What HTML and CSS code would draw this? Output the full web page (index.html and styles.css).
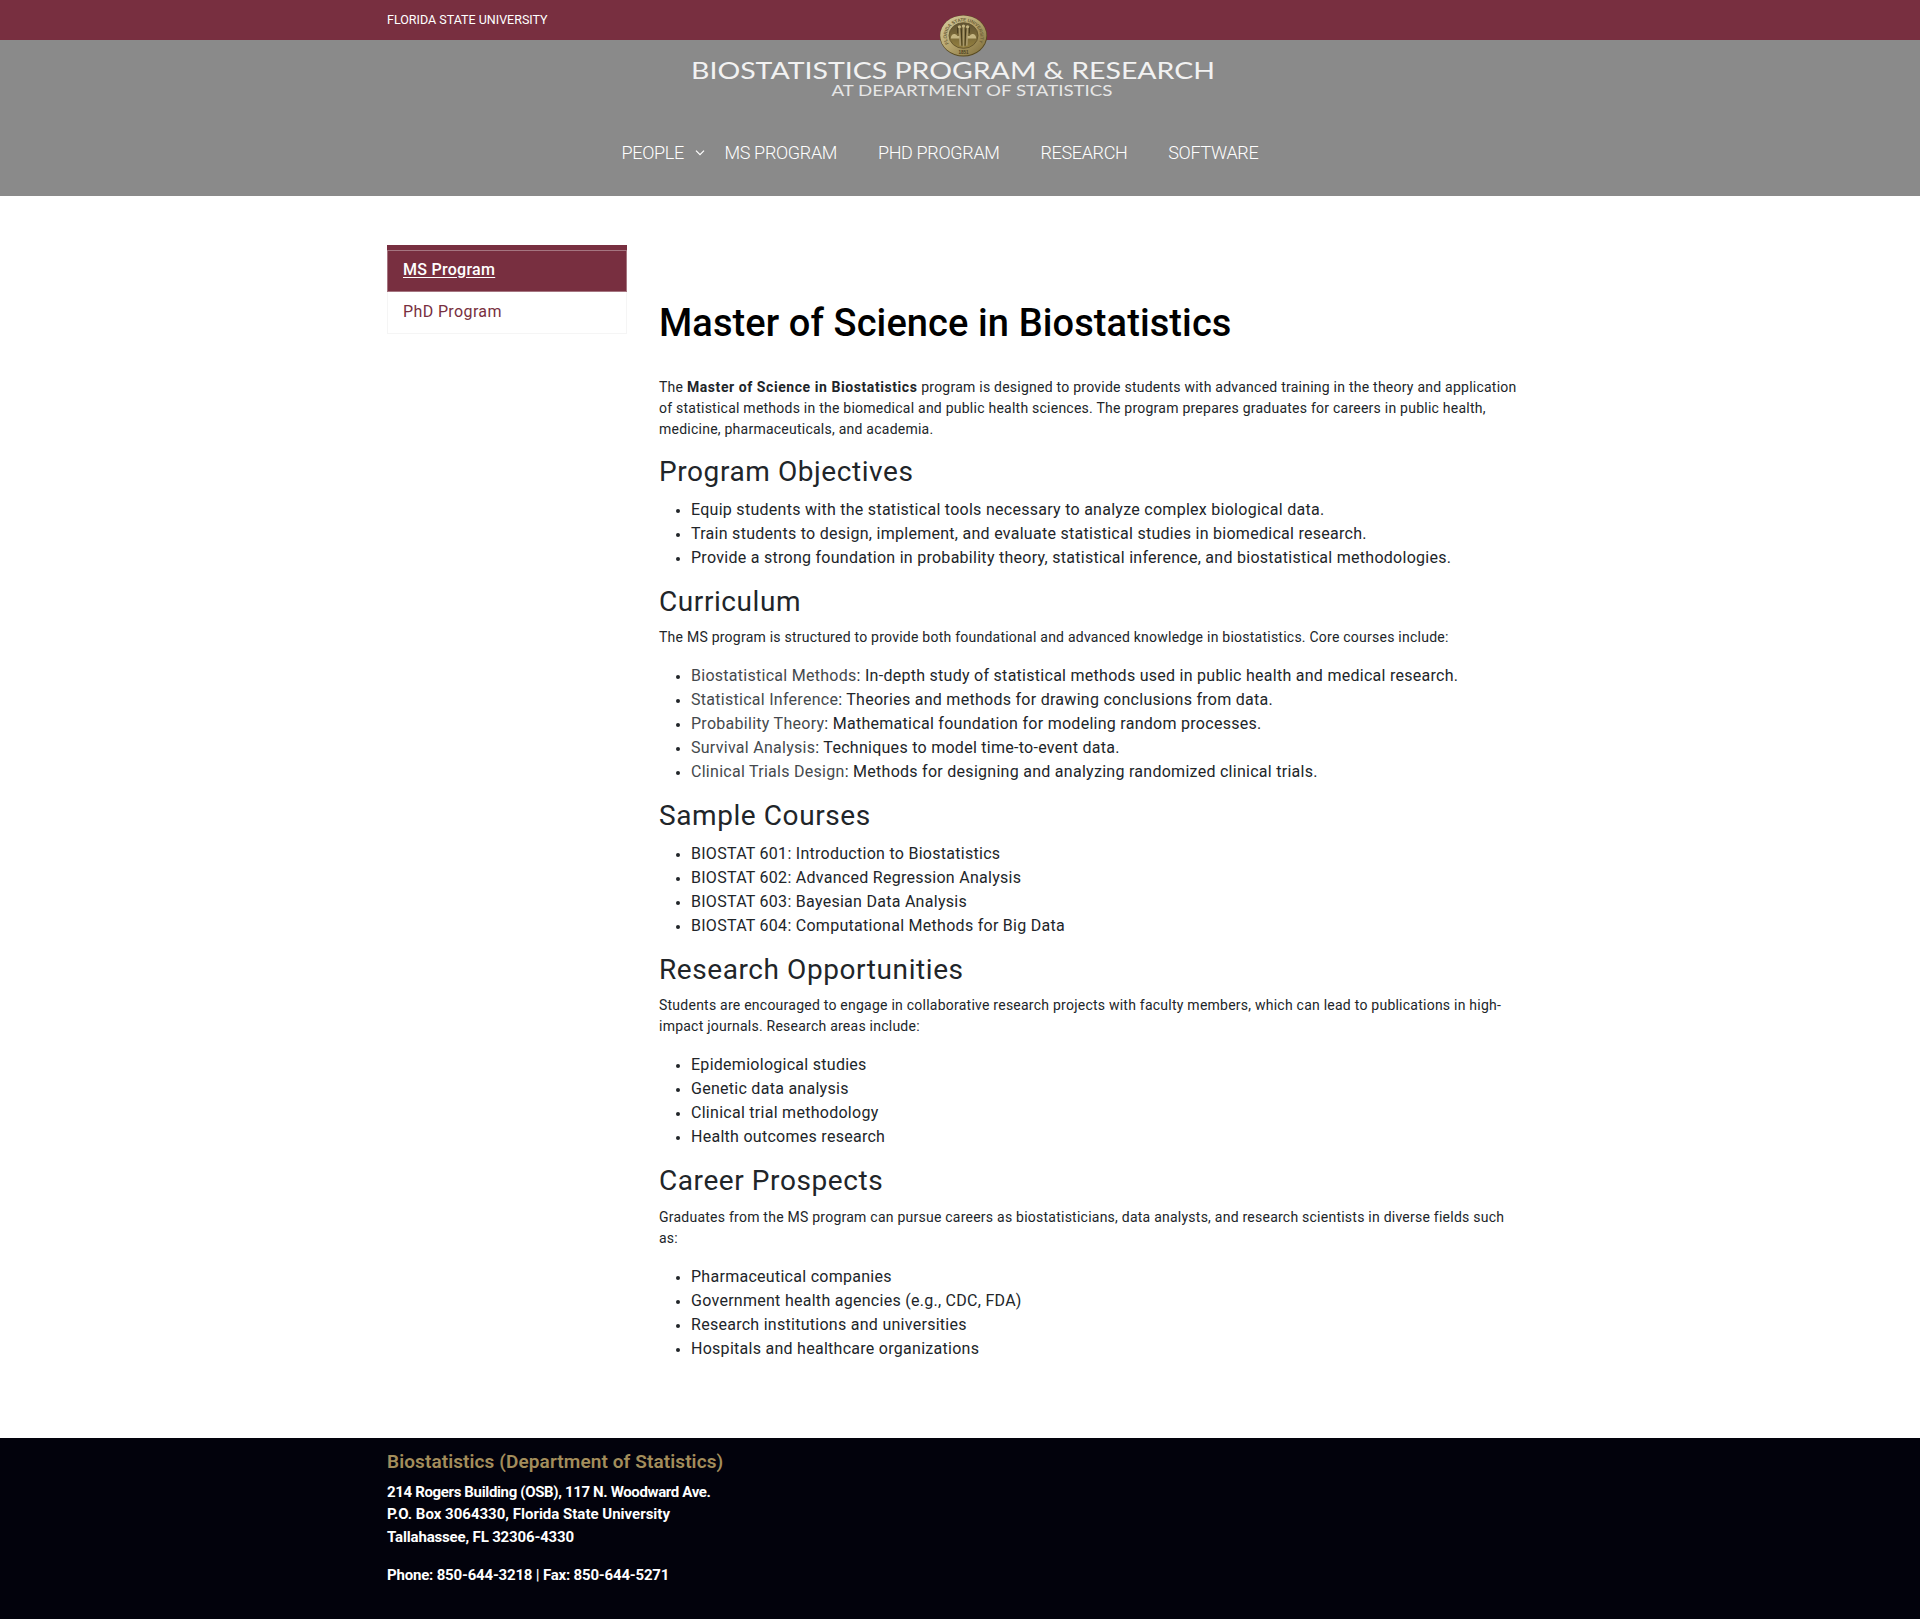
FILE: index.html
```html
<!DOCTYPE html>
<html lang="en">
<head>
<meta charset="utf-8">
<title>MS Program | Biostatistics</title>
<link rel="stylesheet" href="styles.css">
</head>
<body>
<div class="topbar"><div class="container"><a class="topbar-link" href="#">FLORIDA STATE UNIVERSITY</a></div></div>
<header class="header">
  <svg class="seal" viewBox="0 0 48 44" aria-label="Florida State University seal">
    <defs>
      <linearGradient id="gold" x1="0" y1="0" x2="1" y2="1"><stop offset="0" stop-color="#d9cfa4"/><stop offset=".5" stop-color="#b5a36c"/><stop offset="1" stop-color="#7b6a38"/></linearGradient>
      <linearGradient id="core" x1="0" y1="0" x2="0" y2="1"><stop offset="0" stop-color="#5f5232"/><stop offset="1" stop-color="#94803f"/></linearGradient>
      <path id="ring" d="M9.500 30A16.500 14.800 0 1 1 38.500 30"/>
    </defs>
    <ellipse cx="24" cy="22.4" rx="23.2" ry="20.2" fill="#57491f"/>
    <ellipse cx="23.8" cy="22" rx="22.6" ry="19.6" fill="url(#gold)"/>
    <ellipse cx="24" cy="22" rx="14.2" ry="12.6" fill="url(#core)" stroke="#5d4f2a" stroke-width=".8"/>
    <text class="seal-text" textLength="62"><textPath href="#ring">FLORIDA STATE UNIVERSITY</textPath></text>
    <g fill="none" stroke="#a8986a" stroke-width="1.600"><path d="M20 15l.8 17M24 14v19M28 15l-.8 17"/></g>
    <g fill="none" stroke="#3f3519" stroke-width=".9"><path d="M21.800 15l.7 17M26.200 15l-.7 17M18.300 14v6M29.700 14v6"/></g>
    <g fill="#c4b581"><circle cx="20" cy="13.500" r="1.600"/><circle cx="24" cy="12.800" r="1.600"/><circle cx="28" cy="13.500" r="1.600"/><path d="M11.500 25q.5-5 4-4.500 2 .5 2.500 2h2v2.500zM36.500 25q-.5-5-4-4.500-2 .5-2.500 2h-2v2.500z"/></g>
    <text class="seal-year" x="24" y="40">1851</text>
  </svg>
  <svg class="wordmark" viewBox="0 0 540 50">
    <text class="wordmark-main" x="6" y="26" textLength="524" lengthAdjust="spacingAndGlyphs">BIOSTATISTICS PROGRAM &amp; RESEARCH</text>
    <text class="wordmark-sub" x="146.500" y="42.500" textLength="281" lengthAdjust="spacingAndGlyphs">AT DEPARTMENT OF STATISTICS</text>
  </svg>
  <nav class="nav">
    <a class="nav-link nav-people" href="#">PEOPLE <svg class="chevron" viewBox="0 0 10 6"><path d="M1 .7l4 4 4-4"/></svg></a>
    <a class="nav-link nav-ms" href="#">MS PROGRAM</a>
    <a class="nav-link" href="#">PHD PROGRAM</a>
    <a class="nav-link" href="#">RESEARCH</a>
    <a class="nav-link" href="#">SOFTWARE</a>
  </nav>
</header>
<main class="container layout">
  <aside class="sidebar">
    <a class="side-link active" href="#">MS Program</a>
    <a class="side-link" href="#">PhD Program</a>
  </aside>
  <article class="content">
    <h1>Master of Science in Biostatistics</h1>
    <p>The <strong>Master of Science in Biostatistics</strong> program is designed to provide students with advanced training in the theory and application of statistical methods in the biomedical and public health sciences. The program prepares graduates for careers in public health, medicine, pharmaceuticals, and academia.</p>
    <h2>Program Objectives</h2>
    <ul>
      <li>Equip students with the statistical tools necessary to analyze complex biological data.</li>
      <li>Train students to design, implement, and evaluate statistical studies in biomedical research.</li>
      <li>Provide a strong foundation in probability theory, statistical inference, and biostatistical methodologies.</li>
    </ul>
    <h2>Curriculum</h2>
    <p>The MS program is structured to provide both foundational and advanced knowledge in biostatistics. Core courses include:</p>
    <ul>
      <li><span class="course">Biostatistical Methods</span>: In-depth study of statistical methods used in public health and medical research.</li>
      <li><span class="course">Statistical Inference</span>: Theories and methods for drawing conclusions from data.</li>
      <li><span class="course">Probability Theory</span>: Mathematical foundation for modeling random processes.</li>
      <li><span class="course">Survival Analysis</span>: Techniques to model time-to-event data.</li>
      <li><span class="course">Clinical Trials Design</span>: Methods for designing and analyzing randomized clinical trials.</li>
    </ul>
    <h2>Sample Courses</h2>
    <ul>
      <li>BIOSTAT 601: Introduction to Biostatistics</li>
      <li>BIOSTAT 602: Advanced Regression Analysis</li>
      <li>BIOSTAT 603: Bayesian Data Analysis</li>
      <li>BIOSTAT 604: Computational Methods for Big Data</li>
    </ul>
    <h2>Research Opportunities</h2>
    <p>Students are encouraged to engage in collaborative research projects with faculty members, which can lead to publications in high-impact journals. Research areas include:</p>
    <ul>
      <li>Epidemiological studies</li>
      <li>Genetic data analysis</li>
      <li>Clinical trial methodology</li>
      <li>Health outcomes research</li>
    </ul>
    <h2>Career Prospects</h2>
    <p>Graduates from the MS program can pursue careers as biostatisticians, data analysts, and research scientists in diverse fields such as:</p>
    <ul>
      <li>Pharmaceutical companies</li>
      <li>Government health agencies (e.g., CDC, FDA)</li>
      <li>Research institutions and universities</li>
      <li>Hospitals and healthcare organizations</li>
    </ul>
  </article>
</main>
<footer class="footer">
  <div class="container">
    <h3>Biostatistics (Department of Statistics)</h3>
    <address><span class="street">214 Rogers Building (OSB), 117 N. Woodward Ave.</span><br>P.O. Box 3064330, Florida State University<br><span class="city">Tallahassee, FL 32306-4330</span></address>
    <p class="phone">Phone: 850-644-3218 | Fax: 850-644-5271</p>
  </div>
</footer>
</body>
</html>
```
FILE: styles.css
```css
* { box-sizing: border-box; }
body {
  margin: 0;
  min-height: 1619px;
  display: flex;
  flex-direction: column;
  background: #fff;
  color: #212529;
  font: 16px/24px Roboto, "Liberation Sans", sans-serif;
}
a { color: inherit; text-decoration: none; }
.container { width: 1170px; margin: 0 auto; padding: 0 12px; }

.topbar { height: 40px; background: #782f40; color: #fff; }
.topbar-link { display: block; padding-top: 8px; font-size: 12.500px; font-weight: 450; line-height: 23px; letter-spacing: 0; }

.header {
  position: relative;
  height: 156px;
  background: #8a8a8a;
  color: #fff;
  display: flex;
  flex-direction: column;
  align-items: center;
}
.seal { position: absolute; left: 939px; top: -27px; width: 49px; height: 45px; }
.seal-text { font: 700 4.600px "Liberation Sans", sans-serif; fill: #6d5f38; }
.seal-year { font: 700 4.500px "Liberation Sans", sans-serif; fill: #4d4223; text-anchor: middle; }
.wordmark { width: 540px; height: 50px; margin: 13px 0 0 -11px; }
.wordmark-main, .wordmark-sub { font-family: Lato, sans-serif; fill: #f2f2f2; }
.wordmark-main { font-size: 22.500px; }
.wordmark-sub { font-size: 15.500px; fill: #e6e6e6; }

.nav { display: flex; align-self: flex-start; margin: 36px 0 0 621.500px; gap: 40.800px; }
.nav-link { font-size: 18px; font-weight: 300; line-height: 27px; letter-spacing: -0.330px; white-space: nowrap; }
.nav-people { display: flex; align-items: center; width: 62.200px; gap: 11px; }
.chevron { flex: none; width: 10px; height: 6px; fill: none; stroke: #fff; stroke-width: 1.200; }

.layout { display: grid; grid-template-columns: 240px 866px; column-gap: 32px; height: 1242px; align-items: start; }
.sidebar { margin-top: 49px; border-top: 5px solid #782f40; color: #782f40; }
.side-link { display: block; height: 42px; padding: 8px 15px; border: 1px solid #f5f5f5; border-top: 0; letter-spacing: 0.380px; }
.side-link.active { padding-top: 7px; background: #782f40; border: 1px solid #a57580; color: #fff; font-weight: 500; letter-spacing: 0.280px; text-decoration: underline; text-underline-offset: 2px; }

.content { padding-top: 105px; }
h1 { margin: 0 0 30.400px; color: #000; font-size: 38px; font-weight: 500; line-height: 45.600px; letter-spacing: 0.100px; }
h2 { margin: 0 0 9.600px; font-size: 28px; font-weight: 400; line-height: 32px; letter-spacing: 0.580px; }
.content p { margin: 0 0 16px; font-size: 14px; line-height: 21px; letter-spacing: 0.240px; }
.content strong { font-weight: 700; letter-spacing: 0.570px; }
.content ul { margin: 0 0 16px; padding-left: 32px; letter-spacing: 0.275px; }
.content li::marker { font-size: 13px; }
.course { color: #45494d; }

.footer { flex: 1; background: #02020c; color: #fff; }
.footer h3 { margin: 0 0 7px; padding-top: 13px; color: #a38d5b; font-size: 19px; font-weight: 600; line-height: 22.800px; letter-spacing: 0.100px; }
.footer address, .phone { font: 700 15px/22.500px Roboto, "Liberation Sans", sans-serif; letter-spacing: 0; }
.street { letter-spacing: -0.350px; }
.city { letter-spacing: -0.160px; }
.phone { margin: 15.500px 0 0; letter-spacing: -0.190px; }
```
